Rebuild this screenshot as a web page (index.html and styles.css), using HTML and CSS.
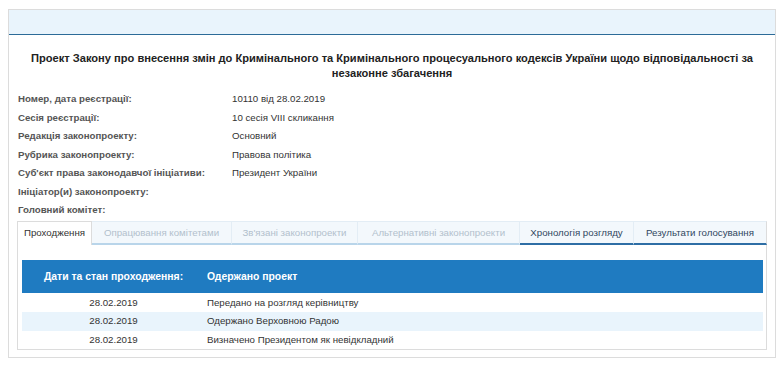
FILE: index.html
```html
<!DOCTYPE html>
<html lang="uk">
<head>
<meta charset="utf-8">
<title>Законопроект</title>
<link rel="stylesheet" href="styles.css">
</head>
<body>
<div class="panel">
  <div class="panel-head"></div>
  <div class="panel-body">
    <h1 class="title">Проект Закону про внесення змін до Кримінального та Кримінального процесуального кодексів України щодо відповідальності за незаконне збагачення</h1>
    <div class="info">
      <div class="lbl">Номер, дата реєстрації:</div><div class="val">10110 від 28.02.2019</div>
      <div class="lbl">Сесія реєстрації:</div><div class="val">10 сесія VIII скликання</div>
      <div class="lbl">Редакція законопроекту:</div><div class="val">Основний</div>
      <div class="lbl">Рубрика законопроекту:</div><div class="val">Правова політика</div>
      <div class="lbl">Суб'єкт права законодавчої ініціативи:</div><div class="val">Президент України</div>
      <div class="lbl">Ініціатор(и) законопроекту:</div><div class="val"></div>
      <div class="lbl">Головний комітет:</div><div class="val"></div>
    </div>
    <div class="tabs">
      <div class="tab-bar">
        <div class="tab active w1">Проходження</div>
        <div class="tab disabled w2">Опрацювання комітетами</div>
        <div class="tab disabled w3">Зв'язані законопроекти</div>
        <div class="tab disabled w4">Альтернативні законопроекти</div>
        <div class="tab normal w5">Хронологія розгляду</div>
        <div class="tab normal w6">Результати голосування</div>
      </div>
      <div class="tab-content">
        <div class="table">
          <div class="thead">
            <div class="c1">Дати та стан проходження:</div>
            <div class="c2">Одержано проект</div>
          </div>
          <div class="row">
            <div class="c1">28.02.2019</div>
            <div class="c2">Передано на розгляд керівництву</div>
          </div>
          <div class="row alt">
            <div class="c1">28.02.2019</div>
            <div class="c2">Одержано Верховною Радою</div>
          </div>
          <div class="row">
            <div class="c1">28.02.2019</div>
            <div class="c2">Визначено Президентом як невідкладний</div>
          </div>
        </div>
      </div>
    </div>
  </div>
</div>
</body>
</html>
```

FILE: styles.css
```css
* { box-sizing: border-box; }
html, body { background: #fff; }
body {
  margin: 0;
  padding: 9px 7px 0 8px;
  font-family: "Liberation Sans", Arial, sans-serif;
  font-size: 9.7px;
  color: #333;
}
.panel {
  border: 1px solid #dcdcdc;
  width: 768px;
}
.panel-head {
  height: 25px;
  background: #e9f4fc;
  border-bottom: 1px solid #2c6b98;
}
.panel-body {
  padding: 16px 8px 7px 8px;
}
.title {
  margin: 0 5px;
  font-size: 11.1px;
  font-weight: bold;
  line-height: 15px;
  text-align: center;
  color: #222;
}
.info {
  margin-top: 9px;
  padding-left: 1px;
  display: grid;
  grid-template-columns: 214px 1fr;
  grid-auto-rows: 18.5px;
  line-height: 18.5px;
}
.lbl { font-weight: bold; color: #555; }
.val { color: #333; }
.tabs {
  margin-top: 1px;
}
.tab-bar {
  display: flex;
  height: 24px;
}
.tab {
  height: 24px;
  line-height: 22px;
  text-align: center;
  background: #f3f8fc;
  border-top: 1px solid #e3edf5;
  border-right: 1px solid #e3edf5;
}
.tab.active {
  background: #fff;
  color: #333;
  border: 1px solid #dcdcdc;
  border-bottom: none;
}
.tab.disabled {
  color: #b2c0cc;
  border-bottom: 2px solid #b9d5ea;
}
.tab.normal {
  color: #2f4660;
  border-bottom: 2px solid #2e6ea5;
}
.w1 { width: 75px; }
.w2 { width: 140px; }
.w3 { width: 126px; }
.w4 { width: 162px; }
.w5 { width: 114px; }
.w6 { width: 133px; border-right: 1px solid #dcdcdc; }
.tab-content {
  border: 1px solid #dcdcdc;
  border-top: none;
  padding: 15px 4px 0 4px;
}
.table { width: 741px; }
.thead {
  display: flex;
  height: 33px;
  line-height: 33px;
  background: #1f7bc1;
  color: #fff;
  font-weight: bold;
  font-size: 10.4px;
}
.row {
  display: flex;
  height: 18.5px;
  line-height: 18.5px;
}
.row.alt { background: #e9f4fc; }
.thead + .row { margin-top: 1px; }
.c1 { width: 183px; text-align: center; }
.c2 { flex: 1; padding-left: 2px; }
```
